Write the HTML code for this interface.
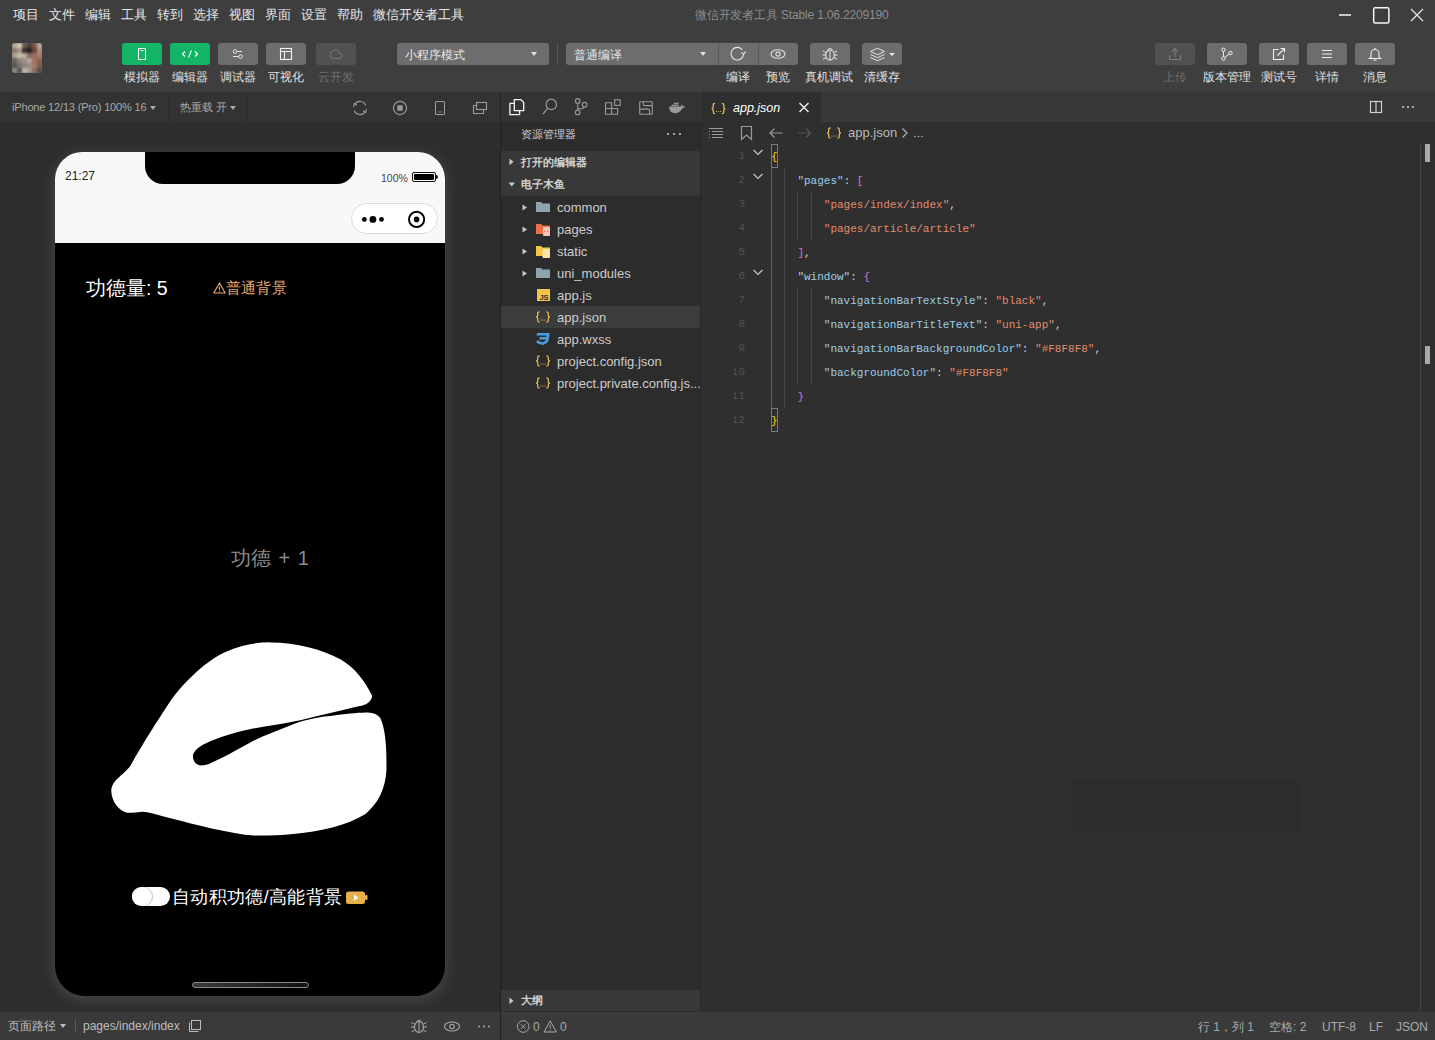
<!DOCTYPE html>
<html><head><meta charset="utf-8">
<style>
*{box-sizing:border-box;margin:0;padding:0}
html,body{width:1435px;height:1040px;overflow:hidden;background:#2d2d2d;font-family:"Liberation Sans",sans-serif;color:#d4d4d4}
.a{position:absolute}
.menu{top:6px;font-size:13px;color:#e6e6e6;white-space:nowrap;line-height:17px}
.btn{top:43px;width:40px;height:22px;border-radius:3px;background:#6d6d6d}
.btn.g{background:#13b466}
.btn.d{background:#515151}
.btn svg,.ic svg{position:absolute;left:0;top:0}
.lbl{top:69px;font-size:12px;color:#e0e0e0;white-space:nowrap;line-height:16px;text-align:center;width:60px}
.lbl.d{color:#6f6f6f}
.k{color:#9cd0e8}
.s{color:#e08c6c}
.dd{top:43px;height:22px;border-radius:3px;background:#6d6d6d;font-size:12px;color:#e6e6e6;line-height:24px;padding-left:8px}
.caret{position:absolute;width:0;height:0;border-left:3px solid transparent;border-right:3px solid transparent;border-top:4px solid #e0e0e0}
</style></head><body>
<!-- ===== top bar ===== -->
<div class="a" style="left:0;top:0;width:1435px;height:92px;background:#3e3e3e"></div>
<div class="a menu" style="left:13px">项目</div>
<div class="a menu" style="left:49px">文件</div>
<div class="a menu" style="left:85px">编辑</div>
<div class="a menu" style="left:121px">工具</div>
<div class="a menu" style="left:157px">转到</div>
<div class="a menu" style="left:193px">选择</div>
<div class="a menu" style="left:229px">视图</div>
<div class="a menu" style="left:265px">界面</div>
<div class="a menu" style="left:301px">设置</div>
<div class="a menu" style="left:337px">帮助</div>
<div class="a menu" style="left:373px">微信开发者工具</div>
<div class="a menu" style="left:695px;top:7px;color:#8c8c8c;font-size:12px;letter-spacing:-0.17px">微信开发者工具 Stable 1.06.2209190</div>
<!-- window controls -->
<svg class="a" style="left:1330px;top:0" width="105" height="30">
 <line x1="9" y1="15" x2="21" y2="15" stroke="#c8c8c8" stroke-width="2"/>
 <rect x="43.7" y="7.7" width="15.2" height="15.2" rx="1.5" fill="none" stroke="#f4f4f4" stroke-width="1.5"/>
 <path d="M81 9 L93 21 M93 9 L81 21" stroke="#f0f0f0" stroke-width="1.1"/>
</svg>
<!-- avatar -->
<div class="a" style="left:12px;top:43px;width:30px;height:30px;border-radius:3px;overflow:hidden;background:#7a6e68"><div class="a" style="left:0;top:0;width:30px;height:30px;filter:blur(1.2px)"><div class="a" style="left:0px;top:0px;width:5px;height:5px;background:#b8a898"></div><div class="a" style="left:5px;top:0px;width:5px;height:5px;background:#d8c8b0"></div><div class="a" style="left:10px;top:0px;width:5px;height:5px;background:#6a5a50"></div><div class="a" style="left:15px;top:0px;width:5px;height:5px;background:#4a3a35"></div><div class="a" style="left:20px;top:0px;width:5px;height:5px;background:#7a5a50"></div><div class="a" style="left:25px;top:0px;width:5px;height:5px;background:#c0a898"></div><div class="a" style="left:0px;top:5px;width:5px;height:5px;background:#8a7a70"></div><div class="a" style="left:5px;top:5px;width:5px;height:5px;background:#a89888"></div><div class="a" style="left:10px;top:5px;width:5px;height:5px;background:#3a302a"></div><div class="a" style="left:15px;top:5px;width:5px;height:5px;background:#2a2020"></div><div class="a" style="left:20px;top:5px;width:5px;height:5px;background:#6a4a40"></div><div class="a" style="left:25px;top:5px;width:5px;height:5px;background:#b09080"></div><div class="a" style="left:0px;top:10px;width:5px;height:5px;background:#a8a090"></div><div class="a" style="left:5px;top:10px;width:5px;height:5px;background:#c8c0a8"></div><div class="a" style="left:10px;top:10px;width:5px;height:5px;background:#b8b0a0"></div><div class="a" style="left:15px;top:10px;width:5px;height:5px;background:#8a6a60"></div><div class="a" style="left:20px;top:10px;width:5px;height:5px;background:#9a6a5a"></div><div class="a" style="left:25px;top:10px;width:5px;height:5px;background:#a88070"></div><div class="a" style="left:0px;top:15px;width:5px;height:5px;background:#6a6260"></div><div class="a" style="left:5px;top:15px;width:5px;height:5px;background:#8a8478"></div><div class="a" style="left:10px;top:15px;width:5px;height:5px;background:#9a9488"></div><div class="a" style="left:15px;top:15px;width:5px;height:5px;background:#b8a898"></div><div class="a" style="left:20px;top:15px;width:5px;height:5px;background:#a07060"></div><div class="a" style="left:25px;top:15px;width:5px;height:5px;background:#8a6050"></div><div class="a" style="left:0px;top:20px;width:5px;height:5px;background:#5a5450"></div><div class="a" style="left:5px;top:20px;width:5px;height:5px;background:#7a7470"></div><div class="a" style="left:10px;top:20px;width:5px;height:5px;background:#8a8480"></div><div class="a" style="left:15px;top:20px;width:5px;height:5px;background:#9a8a80"></div><div class="a" style="left:20px;top:20px;width:5px;height:5px;background:#a87868"></div><div class="a" style="left:25px;top:20px;width:5px;height:5px;background:#7a5a50"></div><div class="a" style="left:0px;top:25px;width:5px;height:5px;background:#8a8a80"></div><div class="a" style="left:5px;top:25px;width:5px;height:5px;background:#5a5450"></div><div class="a" style="left:10px;top:25px;width:5px;height:5px;background:#c0b8a8"></div><div class="a" style="left:15px;top:25px;width:5px;height:5px;background:#a8a090"></div><div class="a" style="left:20px;top:25px;width:5px;height:5px;background:#8a6a60"></div><div class="a" style="left:25px;top:25px;width:5px;height:5px;background:#5a4a45"></div></div></div>
<!-- left buttons -->
<div class="a btn g" style="left:122px"><svg width="40" height="22"><rect x="16.5" y="5.5" width="7" height="11" rx="0.5" fill="none" stroke="#fff" stroke-width="1.1"/><line x1="18.5" y1="7.6" x2="21.5" y2="7.6" stroke="#fff" stroke-width="0.9"/></svg></div>
<div class="a btn g" style="left:170px"><svg width="40" height="22"><path d="M15 8.5 L12.5 11 L15 13.5 M25 8.5 L27.5 11 L25 13.5 M21.5 7.5 L18.5 14.5" fill="none" stroke="#fff" stroke-width="1.1"/></svg></div>
<div class="a btn" style="left:218px"><svg width="40" height="22"><circle cx="17" cy="8.5" r="1.8" fill="none" stroke="#e8e8e8" stroke-width="1"/><line x1="19" y1="8.5" x2="24" y2="8.5" stroke="#e8e8e8" stroke-width="1"/><circle cx="22.5" cy="13.5" r="1.8" fill="none" stroke="#e8e8e8" stroke-width="1"/><line x1="15" y1="13.5" x2="20.5" y2="13.5" stroke="#e8e8e8" stroke-width="1"/></svg></div>
<div class="a btn" style="left:266px"><svg width="40" height="22"><rect x="14.5" y="5.5" width="11" height="11" fill="none" stroke="#f0f0f0" stroke-width="1.1"/><line x1="14.5" y1="8.5" x2="25.5" y2="8.5" stroke="#f0f0f0" stroke-width="1"/><line x1="18.5" y1="8.5" x2="18.5" y2="16.5" stroke="#f0f0f0" stroke-width="1"/></svg></div>
<div class="a btn d" style="left:316px"><svg width="40" height="22"><path d="M18 15.5 L24 15.5 A2.6 2.6 0 0 0 23.2 10.4 A3.6 3.6 0 0 0 16.5 8.5 A3.6 3.6 0 0 0 18 15.5 Z" fill="none" stroke="#7a7a7a" stroke-width="1"/></svg></div>
<div class="a lbl" style="left:112px">模拟器</div>
<div class="a lbl" style="left:160px">编辑器</div>
<div class="a lbl" style="left:208px">调试器</div>
<div class="a lbl" style="left:256px">可视化</div>
<div class="a lbl d" style="left:306px">云开发</div>
<!-- mode dropdown -->
<div class="a dd" style="left:397px;width:152px">小程序模式<span class="caret" style="left:134px;top:9px"></span></div>
<div class="a" style="left:557px;top:43px;width:1px;height:22px;background:#555"></div>
<div class="a dd" style="left:566px;width:232px">普通编译<span class="caret" style="left:134px;top:9px"></span>
 <span class="a" style="left:152px;top:0;width:1px;height:22px;background:#5a5a5a"></span>
 <span class="a" style="left:192px;top:0;width:1px;height:22px;background:#5a5a5a"></span>
 <svg class="a" style="left:152px;top:0" width="80" height="22">
  <path d="M24.1 6.6 A6.3 6.3 0 1 0 25.6 10.8" fill="none" stroke="#e6e6e6" stroke-width="1.1"/><path d="M23.2 9.4 L25.7 11.2 L27.6 8.6" fill="none" stroke="#e6e6e6" stroke-width="1.1"/>
  <ellipse cx="60" cy="11" rx="7" ry="4.3" fill="none" stroke="#e0e0e0" stroke-width="1.1"/><circle cx="60" cy="11" r="2.1" fill="none" stroke="#e0e0e0" stroke-width="1.1"/>
 </svg>
</div>
<div class="a btn" style="left:810px;width:40px"><svg width="40" height="22"><ellipse cx="20" cy="12" rx="4.3" ry="5" fill="none" stroke="#e8e8e8" stroke-width="1.1"/><line x1="20" y1="8" x2="20" y2="17" stroke="#e8e8e8" stroke-width="1"/><path d="M17.5 6.8 Q20 4 22.5 6.8 M15.7 9.5 L13 8 M24.3 9.5 L27 8 M15.7 12 L12.5 12 M24.3 12 L27.5 12 M15.9 14.5 L13 16.3 M24.1 14.5 L27 16.3" fill="none" stroke="#e8e8e8" stroke-width="1"/></svg></div>
<div class="a btn" style="left:862px;width:40px"><svg width="40" height="22"><path d="M8.5 8.5 L15.5 5.3 L22.5 8.5 L15.5 11.7 Z" fill="none" stroke="#e8e8e8" stroke-width="1"/><path d="M8.5 11.5 L15.5 14.7 L22.5 11.5 M8.5 14.5 L15.5 17.7 L22.5 14.5" fill="none" stroke="#e8e8e8" stroke-width="1"/><path d="M27 10 L33 10 L30 13 Z" fill="#e8e8e8"/></svg></div>
<div class="a lbl" style="left:708px">编译</div>
<div class="a lbl" style="left:748px">预览</div>
<div class="a lbl" style="left:799px">真机调试</div>
<div class="a lbl" style="left:852px">清缓存</div>
<!-- right buttons -->
<div class="a btn d" style="left:1155px"><svg width="40" height="22"><path d="M20 14 L20 6 M17 8.5 L20 5.5 L23 8.5 M14.5 12 L14.5 16.5 L25.5 16.5 L25.5 12" fill="none" stroke="#7a7a7a" stroke-width="1.1"/></svg></div>
<div class="a btn" style="left:1207px"><svg width="40" height="22"><circle cx="16.5" cy="6.8" r="1.7" fill="none" stroke="#eee" stroke-width="1"/><circle cx="16.5" cy="15.5" r="1.7" fill="none" stroke="#eee" stroke-width="1"/><circle cx="23.5" cy="10" r="1.7" fill="none" stroke="#eee" stroke-width="1"/><path d="M16.5 8.5 L16.5 13.8 M22.2 11.2 L17.7 14.3" fill="none" stroke="#eee" stroke-width="1"/></svg></div>
<div class="a btn" style="left:1259px"><svg width="40" height="22"><path d="M19.5 6.5 L14.5 6.5 L14.5 16.5 L24.5 16.5 L24.5 11.5 M18.5 12.5 L25 6 M21.5 5.5 L25.5 5.5 L25.5 9.5" fill="none" stroke="#eee" stroke-width="1.1"/></svg></div>
<div class="a btn" style="left:1307px"><svg width="40" height="22"><path d="M15 7.5 L25 7.5 M15 11 L25 11 M15 14.5 L25 14.5" stroke="#eee" stroke-width="1.1"/></svg></div>
<div class="a btn" style="left:1355px"><svg width="40" height="22"><path d="M16 14.5 L16 10.5 A4 4 0 0 1 24 10.5 L24 14.5 L25.5 15.5 L14.5 15.5 Z M18.5 17 L21.5 17 M20 5 L20 6.5" fill="none" stroke="#eee" stroke-width="1.1"/></svg></div>
<div class="a lbl d" style="left:1145px">上传</div>
<div class="a lbl" style="left:1197px">版本管理</div>
<div class="a lbl" style="left:1249px">测试号</div>
<div class="a lbl" style="left:1297px">详情</div>
<div class="a lbl" style="left:1345px">消息</div>
<!--TOPEND-->
<!-- ===== left simulator panel ===== -->
<div class="a" style="left:0;top:92px;width:500px;height:30px;background:#333333"></div>
<div class="a" style="left:0;top:122px;width:500px;height:889px;background:#2e2e2e"></div>
<div class="a" style="left:12px;top:100px;font-size:11px;letter-spacing:-0.17px;color:#a9a9a9;white-space:nowrap;line-height:14px">iPhone 12/13 (Pro) 100% 16</div>
<span class="caret" style="left:150px;top:106px;border-top-color:#a9a9a9"></span>
<div class="a" style="left:168px;top:92px;width:1px;height:30px;background:#2c2c2c"></div>
<div class="a" style="left:180px;top:100px;font-size:11px;color:#a9a9a9;white-space:nowrap;line-height:14px">热重载 开</div>
<span class="caret" style="left:230px;top:106px;border-top-color:#a9a9a9"></span>
<div class="a" style="left:247px;top:92px;width:1px;height:30px;background:#2c2c2c"></div>
<svg class="a" style="left:340px;top:92px" width="160" height="30">
 <path d="M14.5 12.5 A6.3 6.3 0 0 1 25.8 13.5 M25.5 19.5 A6.3 6.3 0 0 1 14.2 18.5" fill="none" stroke="#9a9a9a" stroke-width="1.1"/>
 <path d="M13.6 15.2 L14.3 11.7 L17 13.2" fill="none" stroke="#9a9a9a" stroke-width="1.1"/><path d="M26.4 16.8 L25.7 20.3 L23 18.8" fill="none" stroke="#9a9a9a" stroke-width="1.1"/>
 <circle cx="60" cy="16" r="6.6" fill="none" stroke="#9a9a9a" stroke-width="1.1"/><rect x="57.3" y="13.3" width="5.4" height="5.4" fill="#9a9a9a"/>
 <rect x="95.5" y="9.5" width="9" height="13" rx="1" fill="none" stroke="#9a9a9a" stroke-width="1.1"/><line x1="98.5" y1="20" x2="101.5" y2="20" stroke="#9a9a9a" stroke-width="1"/>
 <rect x="136.5" y="10.5" width="10" height="7" fill="none" stroke="#9a9a9a" stroke-width="1.1"/><path d="M136.5 13.5 L133.5 13.5 L133.5 21.5 L143.5 21.5 L143.5 17.5" fill="none" stroke="#9a9a9a" stroke-width="1.1"/>
</svg>
<!-- phone -->
<div class="a" style="left:55px;top:152px;width:390px;height:844px;border-radius:27px 27px 30px 30px;background:#000;box-shadow:0 3px 12px 2px rgba(110,110,110,0.35);overflow:hidden">
 <div class="a" style="left:0;top:0;width:390px;height:91px;background:#f8f8f8"></div>
 <div class="a" style="left:90px;top:0;width:210px;height:32px;background:#000;border-radius:0 0 18px 18px"></div>
 <div class="a" style="left:10px;top:17px;font-size:12px;color:#222;line-height:14px">21:27</div>
 <div class="a" style="left:326px;top:20px;font-size:10.5px;color:#444;line-height:13px">100%</div>
 <div class="a" style="left:357px;top:20px;width:24px;height:10px;border:1.4px solid #111;border-radius:2px;padding:1px"><div style="width:100%;height:100%;background:#000;border-radius:1px"></div></div>
 <div class="a" style="left:381px;top:23px;width:2px;height:4px;background:#111;border-radius:0 2px 2px 0"></div>
 <div class="a" style="left:296px;top:51px;width:87px;height:31px;border-radius:16px;background:#fff;border:1px solid #dcdcdc"></div>
 <svg class="a" style="left:296px;top:51px" width="87" height="31">
  <circle cx="13.4" cy="16.4" r="2.4" fill="#000"/><circle cx="21.9" cy="16.4" r="3.4" fill="#000"/><circle cx="30.5" cy="16.4" r="2.4" fill="#000"/>
  <circle cx="65.6" cy="16.4" r="7.6" fill="none" stroke="#000" stroke-width="1.9"/><circle cx="65.6" cy="16.4" r="2.8" fill="#000"/>
 </svg>
 <div class="a" style="left:31px;top:124px;font-size:19.5px;color:#fff;line-height:24px;white-space:nowrap">功德量: 5</div>
 <div class="a" style="left:158px;top:127px;font-size:15.3px;letter-spacing:0.2px;color:#e6a56c;line-height:18px;white-space:nowrap"><svg width="13" height="12" style="vertical-align:-1px"><path d="M6.5 1 L12.2 11 L0.8 11 Z" fill="none" stroke="#e6a56c" stroke-width="1.2" stroke-linejoin="round"/><line x1="6.5" y1="4.5" x2="6.5" y2="8" stroke="#e6a56c" stroke-width="1.2"/><circle cx="6.5" cy="9.5" r="0.6" fill="#e6a56c"/></svg>普通背景</div>
 <div class="a" style="left:176px;top:394px;font-size:20px;color:#8c8c8c;line-height:24px;white-space:nowrap;word-spacing:2px">功德 + 1</div>
 <svg class="a" style="left:45px;top:478px" width="300" height="215" viewBox="0 0 1435 1028">
  <path fill="#fff" d="M816 59 C940 60 1060 90 1150 140 C1220 180 1270 250 1300 311 C1305 330 1285 355 1256 361 C1200 372 1150 385 1112 395 C1040 412 980 428 915 440 C850 452 780 462 717 474 C640 490 560 515 510 540 C460 562 440 590 445 610 C448 635 465 650 494 647 C520 645 580 615 717 539 C780 505 850 480 915 454 C980 428 1050 415 1112 410 C1170 403 1230 396 1270 395 C1300 395 1320 398 1340 420 C1365 470 1372 560 1370 672 C1365 760 1330 830 1270 880 C1180 935 1060 965 900 978 C820 985 740 984 700 980 C550 960 400 915 296 890 C260 880 230 868 200 869 C170 872 150 876 130 874 C90 865 55 820 54 770 C54 720 110 695 145 650 C200 550 270 440 346 326 C420 230 520 140 600 105 C680 70 750 58 816 59 Z"/>
 </svg>
 <div class="a" style="left:77px;top:735px;width:38px;height:19px;border-radius:10px;background:#fff"></div>
 <div class="a" style="left:77px;top:735px;width:20px;height:19px;border-radius:50%;box-shadow:1px 0 1px rgba(0,0,0,0.25);background:#fff"></div>
 <div class="a" style="left:117px;top:734px;font-size:18px;letter-spacing:0.35px;color:#fff;line-height:22px;white-space:nowrap">自动积功德/高能背景</div>
 <svg class="a" style="left:291px;top:739px" width="22" height="14"><rect x="0" y="0.5" width="19" height="12.5" rx="2.5" fill="#e8b04a"/><rect x="19" y="4" width="2.5" height="5" rx="1" fill="#e8b04a"/><path d="M8 3.8 L12.5 6.8 L8 9.8 Z" fill="#fff"/></svg>
 <div class="a" style="left:137px;top:830px;width:117px;height:6px;border-radius:3px;border:1px solid #8a8a8a;background:linear-gradient(90deg,#3a3a3a,#111)"></div>
</div>
<!-- left status bar -->
<div class="a" style="left:0;top:1012px;width:500px;height:28px;background:#3a3a3a"></div>
<div class="a" style="left:8px;top:1019px;font-size:12px;color:#bdbdbd;line-height:15px;white-space:nowrap">页面路径</div>
<span class="caret" style="left:60px;top:1024px;border-top-color:#bdbdbd"></span>
<div class="a" style="left:75px;top:1019px;width:1px;height:13px;background:#5a5a5a"></div>
<div class="a" style="left:83px;top:1019px;font-size:12px;color:#bdbdbd;line-height:15px;white-space:nowrap">pages/index/index</div>
<svg class="a" style="left:186px;top:1018px" width="16" height="16"><rect x="5.5" y="2.5" width="9" height="9" fill="none" stroke="#bdbdbd" stroke-width="1"/><path d="M3.5 4.5 L3.5 13.5 L12.5 13.5" fill="none" stroke="#bdbdbd" stroke-width="1"/></svg>
<svg class="a" style="left:405px;top:1011px" width="95" height="29">
 <ellipse cx="14" cy="16" rx="4.5" ry="5.5" fill="none" stroke="#aaa" stroke-width="1.1"/><line x1="14" y1="11" x2="14" y2="21" stroke="#aaa" stroke-width="1"/>
 <path d="M11.5 10.5 Q14 7.5 16.5 10.5 M9.5 13 L6.5 11.5 M18.5 13 L21.5 11.5 M9.5 16 L6 16 M18.5 16 L22 16 M9.7 19 L6.5 21 M18.3 19 L21.5 21" fill="none" stroke="#aaa" stroke-width="1"/>
 <ellipse cx="47" cy="15.5" rx="7.5" ry="4.5" fill="none" stroke="#aaa" stroke-width="1.1"/><circle cx="47" cy="15.5" r="2.2" fill="none" stroke="#aaa" stroke-width="1.1"/>
 <circle cx="74" cy="15.5" r="1" fill="#aaa"/><circle cx="79" cy="15.5" r="1" fill="#aaa"/><circle cx="84" cy="15.5" r="1" fill="#aaa"/>
</svg>
<!--LEFTEND-->
<!-- ===== explorer ===== -->
<div class="a" style="left:500px;top:92px;width:1px;height:948px;background:#222"></div>
<div class="a" style="left:501px;top:92px;width:199px;height:30px;background:#333333"></div>
<div class="a" style="left:501px;top:122px;width:199px;height:889px;background:#2c2c2c"></div>
<svg class="a" style="left:501px;top:92px" width="199" height="30">
 <path d="M13.3 11.4 L8.9 11.4 L8.9 22.7 L18.6 22.7 L18.6 18.6" fill="none" stroke="#f2f2f2" stroke-width="1.3"/>
 <path d="M13.3 7.6 L19.8 7.6 L22.7 10.5 L22.7 18.6 L13.3 18.6 Z" fill="none" stroke="#f2f2f2" stroke-width="1.3"/>
 <circle cx="50.3" cy="12.4" r="5.2" fill="none" stroke="#9a9a9a" stroke-width="1.2"/><line x1="46.6" y1="16.4" x2="42" y2="22.2" stroke="#9a9a9a" stroke-width="1.3"/>
 <circle cx="76.7" cy="8.9" r="2.3" fill="none" stroke="#9a9a9a" stroke-width="1.1"/><circle cx="76.7" cy="20.4" r="2.3" fill="none" stroke="#9a9a9a" stroke-width="1.1"/><circle cx="83.6" cy="12.7" r="2.3" fill="none" stroke="#9a9a9a" stroke-width="1.1"/>
 <path d="M76.7 11.2 L76.7 18.1 M83.3 15 Q82.5 16.7 80.5 16.7 L76.7 16.7" fill="none" stroke="#9a9a9a" stroke-width="1.1"/>
 <path d="M104.5 10.7 L110.6 10.7 L110.6 22.2 L104.5 22.2 Z M104.5 16.5 L116.6 16.5 L116.6 22.2 L110.6 22.2" fill="none" stroke="#9a9a9a" stroke-width="1.1"/>
 <rect x="113.6" y="7.8" width="5.6" height="5.6" fill="none" stroke="#9a9a9a" stroke-width="1.1"/>
 <rect x="138.7" y="9.7" width="12.6" height="12.6" rx="0.8" fill="none" stroke="#9a9a9a" stroke-width="1.1"/>
 <path d="M142.3 9.7 L142.3 12.2 Q142.3 13.6 143.7 13.6 L151.3 13.6 M138.7 17.1 L146.5 17.1 Q148.6 17.1 148.6 19 L148.6 22.3" fill="none" stroke="#9a9a9a" stroke-width="1.1"/>
 <path d="M168 14.5 L179.8 14.5 Q180.2 12.8 181.2 12 Q181.3 13.5 181.6 14.6 L184.5 14.3 Q183.3 15.9 181.2 16.6 Q178.5 21.3 174.2 21.3 Q168.3 21.3 168 14.5 Z" fill="#9a9a9a"/>
 <rect x="170.6" y="12.6" width="2.1" height="1.7" fill="#9a9a9a"/><rect x="173" y="12.6" width="2.1" height="1.7" fill="#9a9a9a"/><rect x="175.4" y="12.6" width="2.1" height="1.7" fill="#9a9a9a"/><rect x="175.4" y="10.6" width="2.1" height="1.7" fill="#9a9a9a"/><rect x="173" y="10.6" width="2.1" height="1.7" fill="#9a9a9a"/>
</svg>
<div class="a" style="left:521px;top:127px;font-size:11px;color:#cfcfcf;line-height:14px">资源管理器</div>
<svg class="a" style="left:664px;top:130px" width="20" height="8"><circle cx="4" cy="4" r="1" fill="#ccc"/><circle cx="10" cy="4" r="1" fill="#ccc"/><circle cx="16" cy="4" r="1" fill="#ccc"/></svg>
<div class="a" style="left:501px;top:151px;width:199px;height:45px;background:#383838"></div>
<svg class="a" style="left:507px;top:157px" width="10" height="34"><path d="M2.5 1.5 L6.5 4.8 L2.5 8.2 Z" fill="#c8c8c8"/><path d="M1.5 25.5 L8 25.5 L4.75 29.5 Z" fill="#c8c8c8"/></svg>
<div class="a" style="left:521px;top:155px;font-size:11px;font-weight:bold;color:#d0d0d0;line-height:14px">打开的编辑器</div>
<div class="a" style="left:521px;top:177px;font-size:11px;font-weight:bold;color:#d0d0d0;line-height:14px">电子木鱼</div>
<div class="a" style="left:501px;top:306px;width:199px;height:22px;background:#3c3c3c"></div>
<svg class="a" style="left:520px;top:196px" width="40" height="198">
 <path d="M2.5 8.5 L7 11.5 L2.5 14.5 Z M2.5 30.5 L7 33.5 L2.5 36.5 Z M2.5 52.5 L7 55.5 L2.5 58.5 Z M2.5 74.5 L7 77.5 L2.5 80.5 Z" fill="#c0c8cc"/>
 <path d="M16 6 L21 6 L22.5 7.5 L30 7.5 L30 16 L16 16 Z" fill="#90a4ae"/>
 <path d="M16 28 L21 28 L22.5 29.5 L30 29.5 L30 38 L16 38 Z" fill="#e8704a"/><rect x="23" y="31" width="7" height="9" rx="1" fill="#f5c4b4"/><path d="M25 35.5 L24 35.5 M28.5 35.5 L27.5 35.5" stroke="#e8704a" stroke-width="1"/>
 <path d="M16 50 L21 50 L22.5 51.5 L30 51.5 L30 60 L16 60 Z" fill="#f2c447"/><rect x="22.5" y="53" width="7.5" height="9" rx="1" fill="#fbe6a8"/>
 <path d="M16 72 L21 72 L22.5 73.5 L30 73.5 L30 82 L16 82 Z" fill="#90a4ae"/>
 <rect x="17" y="93" width="13" height="12" fill="#f2c447"/><text x="28.6" y="104" font-size="7.5" font-family="Liberation Sans" font-weight="bold" fill="#2a2a2a" text-anchor="end">JS</text>
 <g transform="translate(15 115)" fill="none" stroke="#ebbd50" stroke-width="1.25"><path d="M4.6 0.8 Q2.7 0.8 2.7 2.6 L2.7 4.6 Q2.7 6 1.1 6 Q2.7 6 2.7 7.4 L2.7 9.4 Q2.7 11.2 4.6 11.2"/><path d="M11.4 0.8 Q13.3 0.8 13.3 2.6 L13.3 4.6 Q13.3 6 14.9 6 Q13.3 6 13.3 7.4 L13.3 9.4 Q13.3 11.2 11.4 11.2"/></g><g transform="translate(15 115)" fill="#ebbd50"><circle cx="5.9" cy="9" r="0.6"/><circle cx="8" cy="9" r="0.6"/><circle cx="10.1" cy="9" r="0.6"/></g>
 <path d="M17 137 L29.8 137 L28.7 143.8 Q28.2 147.3 22.8 149 Q19 148.3 16.3 146.8 L17.1 144 Q20 145.8 22.8 146.3 Q25.6 145.6 25.9 143.6 L19.2 143.6 L19.7 141 L26.3 141 L26.6 139.6 L16.6 139.6 Z" fill="#4a9ee0"/>
 <g transform="translate(15 159)" fill="none" stroke="#ebbd50" stroke-width="1.25"><path d="M4.6 0.8 Q2.7 0.8 2.7 2.6 L2.7 4.6 Q2.7 6 1.1 6 Q2.7 6 2.7 7.4 L2.7 9.4 Q2.7 11.2 4.6 11.2"/><path d="M11.4 0.8 Q13.3 0.8 13.3 2.6 L13.3 4.6 Q13.3 6 14.9 6 Q13.3 6 13.3 7.4 L13.3 9.4 Q13.3 11.2 11.4 11.2"/></g><g transform="translate(15 159)" fill="#ebbd50"><circle cx="5.9" cy="9" r="0.6"/><circle cx="8" cy="9" r="0.6"/><circle cx="10.1" cy="9" r="0.6"/></g>
 <g transform="translate(15 181)" fill="none" stroke="#ebbd50" stroke-width="1.25"><path d="M4.6 0.8 Q2.7 0.8 2.7 2.6 L2.7 4.6 Q2.7 6 1.1 6 Q2.7 6 2.7 7.4 L2.7 9.4 Q2.7 11.2 4.6 11.2"/><path d="M11.4 0.8 Q13.3 0.8 13.3 2.6 L13.3 4.6 Q13.3 6 14.9 6 Q13.3 6 13.3 7.4 L13.3 9.4 Q13.3 11.2 11.4 11.2"/></g><g transform="translate(15 181)" fill="#ebbd50"><circle cx="5.9" cy="9" r="0.6"/><circle cx="8" cy="9" r="0.6"/><circle cx="10.1" cy="9" r="0.6"/></g>
</svg>
<div class="a" style="left:557px;top:197px;font-size:13px;color:#cccccc;line-height:22px;white-space:nowrap;width:143px;overflow:hidden">
 <div>common</div><div>pages</div><div>static</div><div>uni_modules</div><div>app.js</div><div>app.json</div><div>app.wxss</div><div>project.config.json</div><div>project.private.config.js...</div>
</div>
<div class="a" style="left:501px;top:990px;width:199px;height:21px;background:#383838"></div>
<svg class="a" style="left:507px;top:996px" width="10" height="10"><path d="M2.5 1.5 L6.5 4.8 L2.5 8.2 Z" fill="#c8c8c8"/></svg>
<div class="a" style="left:521px;top:993px;font-size:11px;font-weight:bold;color:#d0d0d0;line-height:14px">大纲</div>
<!--EXPEND-->
<!-- ===== editor ===== -->
<div class="a" style="left:700px;top:92px;width:735px;height:30px;background:#383838"></div>
<div class="a" style="left:701px;top:92px;width:120px;height:30px;background:#2f2f2f"></div>
<div class="a" style="left:700px;top:122px;width:735px;height:889px;background:#2f2f2f"></div>
<svg class="a" style="left:701px;top:92px" width="120" height="30">
 <g transform="translate(9.5 10.5)" fill="none" stroke="#e8bd58" stroke-width="1.25"><path d="M4.6 0.8 Q2.7 0.8 2.7 2.6 L2.7 4.6 Q2.7 6 1.1 6 Q2.7 6 2.7 7.4 L2.7 9.4 Q2.7 11.2 4.6 11.2"/><path d="M11.4 0.8 Q13.3 0.8 13.3 2.6 L13.3 4.6 Q13.3 6 14.9 6 Q13.3 6 13.3 7.4 L13.3 9.4 Q13.3 11.2 11.4 11.2"/></g><g transform="translate(9.5 10.5)" fill="#e8bd58"><circle cx="5.9" cy="9" r="0.6"/><circle cx="8" cy="9" r="0.6"/><circle cx="10.1" cy="9" r="0.6"/></g>
 <path d="M98.5 11 L107.5 20 M107.5 11 L98.5 20" stroke="#f0f0f0" stroke-width="1.4"/>
</svg>
<div class="a" style="left:733px;top:100px;font-size:12.5px;font-style:italic;color:#ffffff;line-height:16px">app.json</div>
<svg class="a" style="left:1360px;top:92px" width="75" height="30">
 <rect x="10.5" y="9.5" width="11" height="11" fill="none" stroke="#cfcfcf" stroke-width="1.2"/><line x1="16" y1="9.5" x2="16" y2="20.5" stroke="#cfcfcf" stroke-width="1.2"/>
 <circle cx="43" cy="15" r="1" fill="#ccc"/><circle cx="48" cy="15" r="1" fill="#ccc"/><circle cx="53" cy="15" r="1" fill="#ccc"/>
</svg>
<!-- breadcrumb -->
<svg class="a" style="left:701px;top:122px" width="240" height="24">
 <path d="M8 6.5 L22 6.5 M11 9.5 L22 9.5 M11 12.5 L22 12.5 M11 15.5 L22 15.5 M8 9.5 L9 9.5 M8 12.5 L9 12.5 M8 15.5 L9 15.5" stroke="#9a9a9a" stroke-width="1"/>
 <path d="M40.5 4.5 L50.5 4.5 L50.5 17.5 L45.5 13 L40.5 17.5 Z" fill="none" stroke="#9a9a9a" stroke-width="1.2"/>
 <path d="M69 11 L81.5 11 M73.5 6.5 L69 11 L73.5 15.5" fill="none" stroke="#9a9a9a" stroke-width="1.2"/>
 <path d="M97 11 L109.5 11 M105 6.5 L109.5 11 L105 15.5" fill="none" stroke="#555" stroke-width="1.2"/>
</svg>
<svg class="a" style="left:826px;top:127px" width="17" height="13"><g transform="translate(0 0)" fill="none" stroke="#e8bd58" stroke-width="1.25"><path d="M4.6 0.8 Q2.7 0.8 2.7 2.6 L2.7 4.6 Q2.7 6 1.1 6 Q2.7 6 2.7 7.4 L2.7 9.4 Q2.7 11.2 4.6 11.2"/><path d="M11.4 0.8 Q13.3 0.8 13.3 2.6 L13.3 4.6 Q13.3 6 14.9 6 Q13.3 6 13.3 7.4 L13.3 9.4 Q13.3 11.2 11.4 11.2"/></g><g transform="translate(0 0)" fill="#e8bd58"><circle cx="5.9" cy="9" r="0.6"/><circle cx="8" cy="9" r="0.6"/><circle cx="10.1" cy="9" r="0.6"/></g></svg>
<div class="a" style="left:848px;top:125px;font-size:13px;color:#b8b8b8;line-height:16px;white-space:nowrap">app.json</div>
<svg class="a" style="left:900px;top:126px" width="30" height="14"><path d="M2.5 2.5 L7 7 L2.5 11.5" fill="none" stroke="#b8b8b8" stroke-width="1.1"/><circle cx="15" cy="10.5" r="0.8" fill="#b8b8b8"/><circle cx="18.5" cy="10.5" r="0.8" fill="#b8b8b8"/><circle cx="22" cy="10.5" r="0.8" fill="#b8b8b8"/></svg>
<!-- gutter -->
<div class="a" style="left:700px;top:144px;width:45px;font-family:'Liberation Mono',monospace;font-size:11px;line-height:24px;color:#515151;text-align:right">1<br>2<br>3<br>4<br>5<br>6<br>7<br>8<br>9<br>10<br>11<br>12</div>
<svg class="a" style="left:750px;top:144px" width="20" height="150">
 <path d="M3.5 6 L8 10.5 L12.5 6 M3.5 30 L8 34.5 L12.5 30 M3.5 126 L8 130.5 L12.5 126" fill="none" stroke="#c5c5c5" stroke-width="1.2"/>
</svg>
<!-- indent guides -->
<div class="a" style="left:771px;top:168px;width:1px;height:240px;background:#5e5e5e"></div>
<div class="a" style="left:784px;top:168px;width:1px;height:240px;background:#454545"></div>
<div class="a" style="left:797px;top:192px;width:1px;height:48px;background:#454545"></div>
<div class="a" style="left:811px;top:192px;width:1px;height:48px;background:#454545"></div>
<div class="a" style="left:797px;top:288px;width:1px;height:96px;background:#454545"></div>
<div class="a" style="left:811px;top:288px;width:1px;height:96px;background:#454545"></div>
<div class="a" style="left:771px;top:144px;width:7px;height:24px;border:1px solid #7a7a7a"></div>
<div class="a" style="left:771px;top:408px;width:7px;height:24px;border:1px solid #7a7a7a"></div>
<pre class="a" style="left:771px;top:145px;font-family:'Liberation Mono',monospace;font-size:11px;line-height:24px;color:#d4d4d4;margin:0">
<span style="color:#ffd700">{</span>
    <span class="k">"pages"</span>: <span style="color:#da70d6">[</span>
        <span class="s">"pages/index/index"</span>,
        <span class="s">"pages/article/article"</span>
    <span style="color:#da70d6">]</span>,
    <span class="k">"window"</span>: <span style="color:#da70d6">{</span>
        <span class="k">"navigationBarTextStyle"</span>: <span class="s">"black"</span>,
        <span class="k">"navigationBarTitleText"</span>: <span class="s">"uni-app"</span>,
        <span class="k">"navigationBarBackgroundColor"</span>: <span class="s">"#F8F8F8"</span>,
        <span class="k">"backgroundColor"</span>: <span class="s">"#F8F8F8"</span>
    <span style="color:#da70d6">}</span>
<span style="color:#ffd700">}</span></pre>
<!-- overview ruler -->
<div class="a" style="left:1420px;top:144px;width:1px;height:867px;background:#474747"></div>
<div class="a" style="left:1425px;top:144px;width:5px;height:18px;background:#a8a8a8"></div>
<div class="a" style="left:1425px;top:346px;width:5px;height:18px;background:#a8a8a8"></div>
<!-- faint watermark -->
<div class="a" style="left:1072px;top:780px;width:228px;height:55px;background:#2c2d2c;opacity:.9"></div>
<div class="a" style="left:700px;top:122px;width:1px;height:889px;background:#282828"></div>
<!-- bottom status -->
<div class="a" style="left:501px;top:1012px;width:934px;height:28px;background:#3a3a3a"></div>
<svg class="a" style="left:514px;top:1018px" width="60" height="16"><circle cx="9.2" cy="8.5" r="5.8" fill="none" stroke="#aaa" stroke-width="1"/><path d="M7 6.3 L11.4 10.7 M11.4 6.3 L7 10.7" stroke="#aaa" stroke-width="1"/><path d="M36.2 2.8 L42.3 14 L30.1 14 Z" fill="none" stroke="#aaa" stroke-width="1" stroke-linejoin="round"/><line x1="36.2" y1="6.5" x2="36.2" y2="10.5" stroke="#aaa" stroke-width="1"/><circle cx="36.2" cy="12.2" r="0.55" fill="#aaa"/></svg>
<div class="a" style="left:533px;top:1020px;font-size:12px;color:#aaa;line-height:15px">0</div>
<div class="a" style="left:560px;top:1020px;font-size:12px;color:#aaa;line-height:15px">0</div>
<div class="a" style="left:1198px;top:1020px;font-size:12px;color:#aaa;line-height:15px;white-space:nowrap">行 1，列 1</div>
<div class="a" style="left:1269px;top:1020px;font-size:12px;color:#aaa;line-height:15px;white-space:nowrap">空格: 2</div>
<div class="a" style="left:1322px;top:1020px;font-size:12px;color:#aaa;line-height:15px;white-space:nowrap">UTF-8</div>
<div class="a" style="left:1369px;top:1020px;font-size:12px;color:#aaa;line-height:15px;white-space:nowrap">LF</div>
<div class="a" style="left:1396px;top:1020px;font-size:12px;color:#aaa;line-height:15px;white-space:nowrap">JSON</div>



</body></html>
